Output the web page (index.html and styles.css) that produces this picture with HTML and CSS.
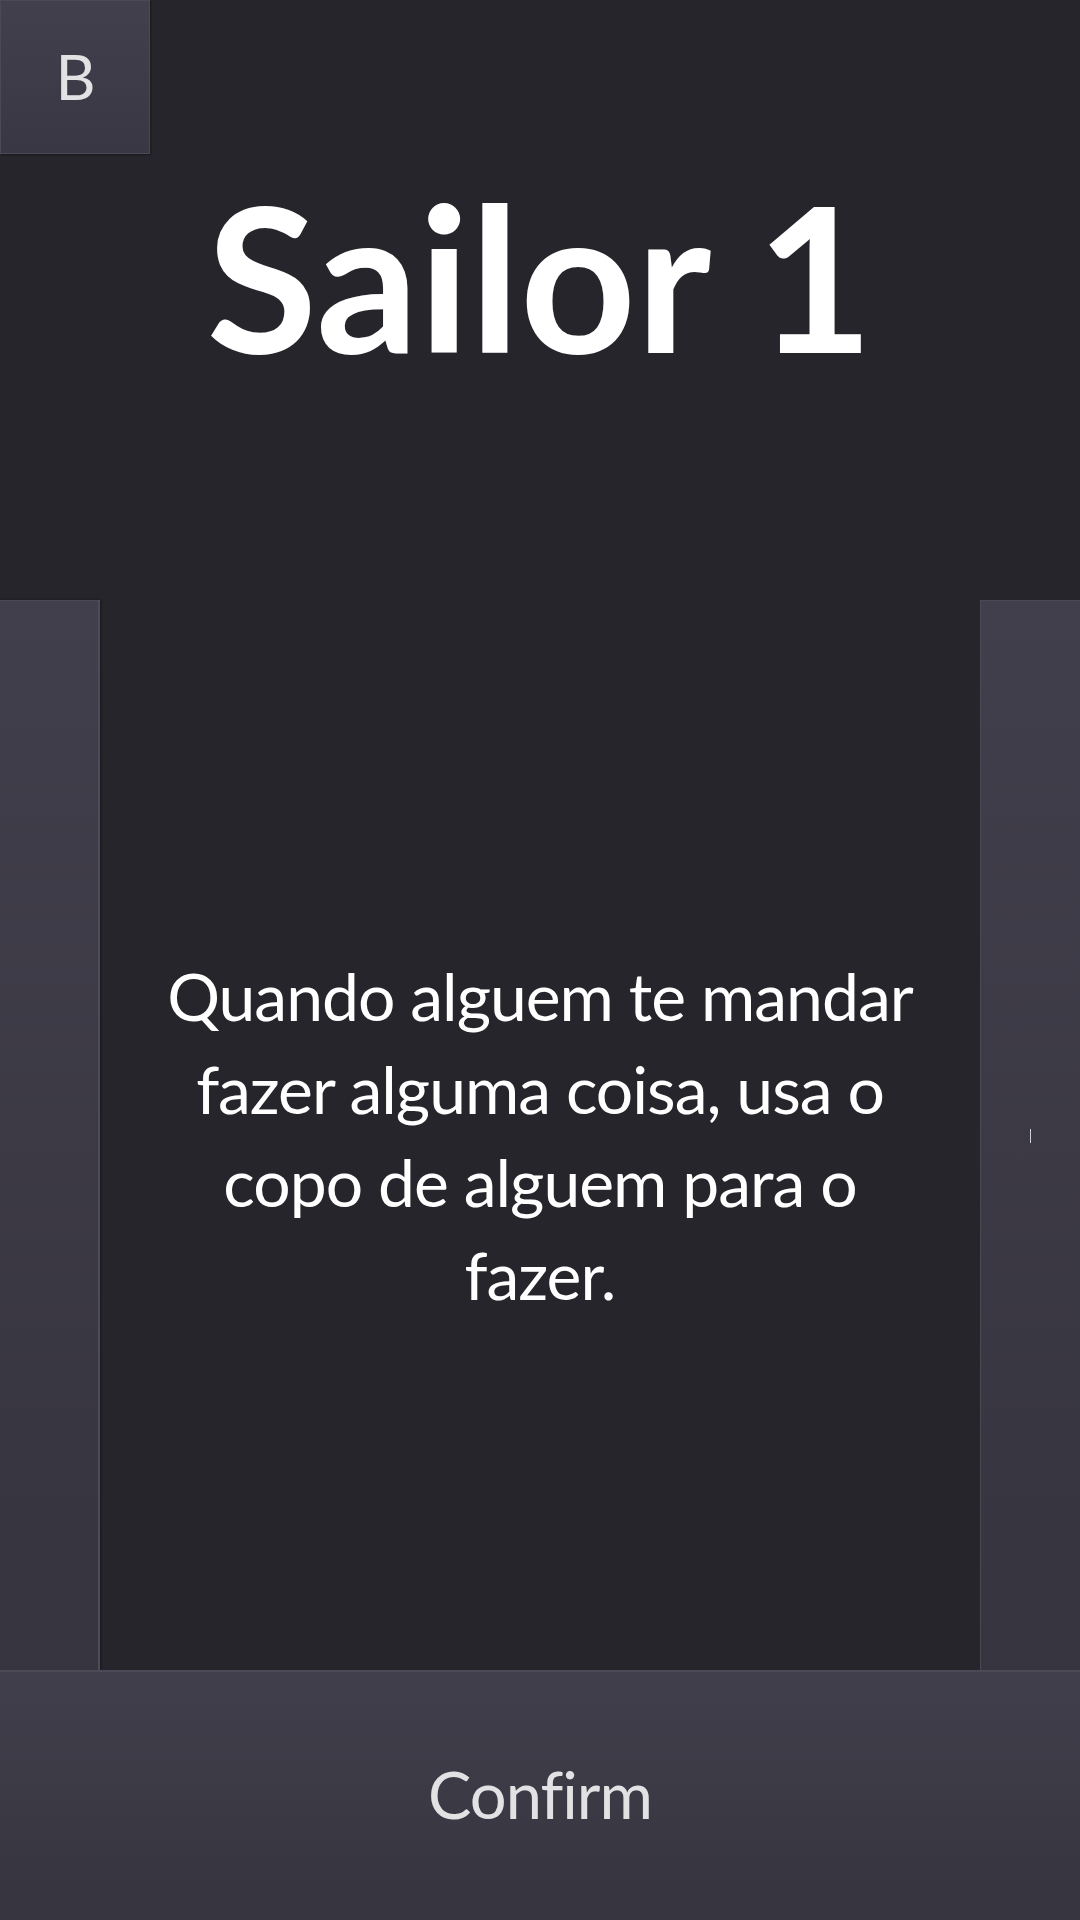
FILE: index.html
```html
<!DOCTYPE html>
<html lang="pt">
<head>
<meta charset="utf-8">
<title>Sailor 1</title>
<link rel="stylesheet" href="styles.css">
</head>
<body>
<div class="screen">
  <header class="header">
    <div class="back-cell"><button class="back">B</button></div>
    <h1 class="title">Sailor 1</h1>
    <div class="spacer"></div>
  </header>
  <main class="middle">
    <div class="side side-left"></div>
    <div class="card">
      <p class="message">Quando alguem te mandar fazer alguma coisa, usa o copo de alguem para o fazer.</p>
    </div>
    <div class="side side-right"><span class="caret"></span></div>
  </main>
  <button class="confirm">Confirm</button>
</div>
</body>
</html>
```

FILE: styles.css
```css
* { box-sizing: border-box; }
html, body {
  margin: 0;
  padding: 0;
  background: #26252b;
}
body {
  font-family: "Lato", "Open Sans", sans-serif;
  color: #ffffff;
}
.screen {
  width: 1080px;
  height: 1920px;
  display: flex;
  flex-direction: column;
  background: #26252b;
}
.header {
  height: 600px;
  display: grid;
  grid-template-columns: 1fr auto 1fr;
  align-items: start;
}
.back-cell { display: flex; }
.back {
  width: 150px;
  height: 154px;
  margin: 0;
  padding: 0 0 2px 0;
  border: 1px solid #4a4955;
  background: linear-gradient(#42404c, #393743);
  color: #e2e2e4;
  font-family: inherit;
  font-size: 62px;
  font-weight: 400;
  letter-spacing: -1px;
  display: flex;
  align-items: center;
  justify-content: center;
  box-shadow: 1px 1px 2px rgba(0,0,0,0.35);
}
.title {
  margin: 0;
  padding-top: 174px;
  font-size: 202px;
  font-weight: 700;
  line-height: 1;
  color: #ffffff;
  text-align: center;
  white-space: nowrap;
}
.middle {
  height: 1070px;
  display: flex;
}
.side {
  width: 100px;
  background: linear-gradient(#423f4c, #36343f);
  display: flex;
  align-items: center;
  justify-content: center;
}
.side-left {
  border-top: 1px solid #4a4955;
  border-right: 2px solid #4d4c57;
  box-shadow: 1px 0 2px rgba(0,0,0,0.4);
}
.side-right {
  border-top: 1px solid #4a4955;
  border-left: 1px solid #4a4955;
}
.caret {
  width: 1px;
  height: 14px;
  background: #cfcfd6;
}
.card {
  flex: 1;
  display: flex;
  align-items: center;
  justify-content: center;
  padding: 0 55px;
}
.message {
  margin: 0;
  font-size: 66px;
  letter-spacing: -1px;
  line-height: 93px;
  text-align: center;
  color: #ffffff;
  font-weight: 400;
}
.confirm {
  height: 250px;
  width: 1080px;
  margin: 0;
  padding: 0 0 4px 0;
  border: none;
  border-top: 2px solid #4b4a56;
  background: linear-gradient(#413f4b, #36343f);
  color: #e2e2e4;
  font-family: inherit;
  font-size: 65px;
  font-weight: 400;
  letter-spacing: -1px;
}
```
